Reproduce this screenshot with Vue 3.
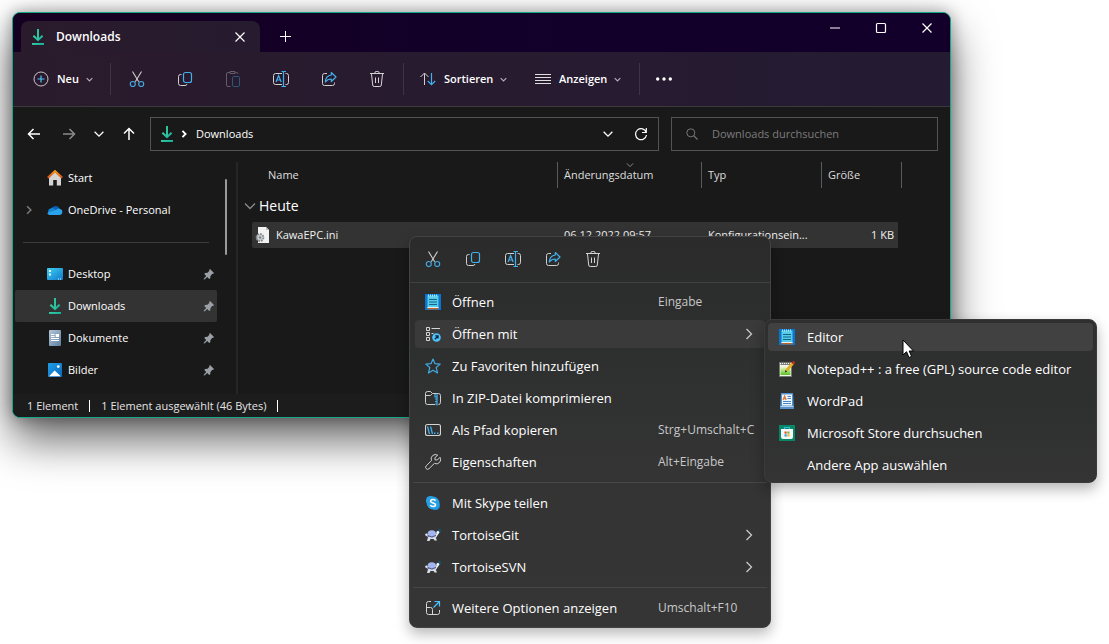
<script setup>
const fileTools = [
  { icon: 'cut', label: 'Ausschneiden' },
  { icon: 'copy', label: 'Kopieren' },
  { icon: 'paste', label: 'Einfügen' },
  { icon: 'rename', label: 'Umbenennen' },
  { icon: 'share', label: 'Freigeben' },
  { icon: 'trash', label: 'Löschen' },
]

const pinned = [
  { icon: 'desktop', label: 'Desktop' },
  { icon: 'download', label: 'Downloads', active: true },
  { icon: 'document', label: 'Dokumente' },
  { icon: 'pictures', label: 'Bilder' },
]

const quickActions = fileTools.filter((tool) => tool.icon !== 'paste')

const menuGroups = [
  [
    { icon: 'notepad', label: 'Öffnen', keys: 'Eingabe' },
    { icon: 'openwith', label: 'Öffnen mit', sub: true, active: true },
    { icon: 'star', label: 'Zu Favoriten hinzufügen' },
    { icon: 'zip', label: 'In ZIP-Datei komprimieren' },
    { icon: 'path', label: 'Als Pfad kopieren', keys: 'Strg+Umschalt+C' },
    { icon: 'wrench', label: 'Eigenschaften', keys: 'Alt+Eingabe' },
  ],
  [
    { icon: 'skype', label: 'Mit Skype teilen' },
    { icon: 'tortoise', label: 'TortoiseGit', sub: true },
    { icon: 'tortoise', label: 'TortoiseSVN', sub: true },
  ],
  [{ icon: 'more', label: 'Weitere Optionen anzeigen', keys: 'Umschalt+F10' }],
]

const openWith = [
  { icon: 'notepad', label: 'Editor', active: true },
  { icon: 'npp', label: 'Notepad++ : a free (GPL) source code editor' },
  { icon: 'wordpad', label: 'WordPad' },
  { icon: 'store', label: 'Microsoft Store durchsuchen' },
  { icon: '', label: 'Andere App auswählen' },
]
</script>

<template>
  <main class="desktop">
    <svg class="sprite" aria-hidden="true">
      <defs>
        <linearGradient id="g-down" x1="0" y1="0" x2="1" y2="1">
          <stop offset="0" stop-color="#3ad29f" /><stop offset="1" stop-color="#0fa59b" />
        </linearGradient>
        <linearGradient id="g-desk" x1="0" y1="0" x2="1" y2="1">
          <stop offset="0" stop-color="#3fd0ee" /><stop offset="1" stop-color="#0f78cf" />
        </linearGradient>
        <linearGradient id="g-doc" x1="0" y1="0" x2="1" y2="1">
          <stop offset="0" stop-color="#b4c5d8" /><stop offset="1" stop-color="#5f7f9f" />
        </linearGradient>
        <linearGradient id="g-pic" x1="0" y1="0" x2="1" y2="1">
          <stop offset="0" stop-color="#1f9fe8" /><stop offset="1" stop-color="#0a66bd" />
        </linearGradient>
        <linearGradient id="g-roof" x1="0" y1="0" x2="0" y2="1">
          <stop offset="0" stop-color="#f7941d" /><stop offset="1" stop-color="#d8541c" />
        </linearGradient>
        <linearGradient id="g-green" x1="0" y1="0" x2="0" y2="1">
          <stop offset="0" stop-color="#eef7c0" /><stop offset="1" stop-color="#58c322" />
        </linearGradient>
      </defs>
      <symbol id="download" viewBox="0 0 16 16">
        <path d="M3.400 6.800L8 11.200l4.600-4.400" fill="none" stroke="url(#g-down)" stroke-width="2" />
        <path d="M2 14h12v2H2z" fill="url(#g-down)" />
        <path d="M7 0h2v11H7z" fill="#2cc49c" />
      </symbol>
      <symbol id="new" viewBox="0 0 16 16">
        <circle cx="8" cy="8" r="7" fill="none" stroke="#c9c4cd" />
        <path d="M8 4.500v7M4.500 8h7" stroke="#4cc2ff" stroke-width="1.200" />
      </symbol>
      <symbol id="cut" viewBox="0 0 16 16">
        <path d="M3.500 .5l6.200 10.200M12.500 .5L6.300 10.700" stroke="#cfcfcf" fill="none" stroke-width="1.100" />
        <circle cx="3.800" cy="13" r="2.500" fill="none" stroke="#43a9e0" stroke-width="1.200" />
        <circle cx="12.200" cy="13" r="2.500" fill="none" stroke="#43a9e0" stroke-width="1.200" />
      </symbol>
      <symbol id="copy" viewBox="0 0 16 16">
        <path d="M4.500 3.500H3.500a2 2 0 0 0-2 2v7a2 2 0 0 0 2 2h4.500a2 2 0 0 0 2-1.500" fill="none" stroke="#d0d0d0" />
        <rect x="6.500" y="1.500" width="8" height="10" rx="2" fill="none" stroke="#43b0ec" stroke-width="1.200" />
      </symbol>
      <symbol id="paste" viewBox="0 0 16 16">
        <path d="M5 1.500H3a1.500 1.500 0 0 0-1.500 1.500v11A1.500 1.500 0 0 0 3 15.500h2.500M5 2.500V.5h5v2zM10 1.500h1.500A1.500 1.500 0 0 1 13 3" fill="none" stroke="#655d6b" />
        <rect x="7.500" y="5.500" width="7" height="10" rx="1.200" fill="none" stroke="#2d587e" />
      </symbol>
      <symbol id="rename" viewBox="0 0 16 16">
        <path d="M9 2.500H2.500a2 2 0 0 0-2 2v7a2 2 0 0 0 2 2H9M12.500 2.500h1a2 2 0 0 1 2 2v7a2 2 0 0 1-2 2h-1" fill="none" stroke="#d0d0d0" />
        <path d="M3 11L5.600 4.500 8.200 11M3.900 9h3.500M8.500 .5h4.500M8.500 15.500h4.500M10.500 .5v15" fill="none" stroke="#43b0ec" stroke-width="1.200" />
      </symbol>
      <symbol id="share" viewBox="0 0 16 16">
        <path d="M6 2.500H3.500a2 2 0 0 0-2 2v8a2 2 0 0 0 2 2h8a2 2 0 0 0 2-2V11.500" fill="none" stroke="#d0d0d0" />
        <path d="M10.300 1.500L15 6l-4.700 4.500V8c-3 0-4.500 1-6 3 .2-3.600 2.300-6.500 6-7z" fill="none" stroke="#43b0ec" stroke-width="1.200" stroke-linejoin="round" />
      </symbol>
      <symbol id="trash" viewBox="0 0 16 16">
        <path d="M1 2.500h14M5.700 2.500a2.300 2.300 0 0 1 4.600 0M2.500 3l1.200 11a1.500 1.500 0 0 0 1.500 1.500h5.600a1.500 1.500 0 0 0 1.500-1.500L13.500 3M6.500 6.500v5.500M9.500 6.500v5.500" fill="none" stroke="#d4d4d4" />
      </symbol>
      <symbol id="sort" viewBox="0 0 16 16">
        <path d="M4.500 14V2.500M.5 6l4-4 4 4" fill="none" stroke="#d0d0d0" />
        <path d="M11.500 2v11.500M7.800 10l3.700 3.700 3.700-3.700" fill="none" stroke="#43b0ec" stroke-width="1.200" />
      </symbol>
      <symbol id="view" viewBox="0 0 16 16">
        <path d="M0 3.500h16M0 6.500h16M0 9.500h16M0 12.500h16" stroke="#dedede" />
      </symbol>
      <symbol id="dots" viewBox="0 0 16 16">
        <circle cx="1.700" cy="8" r="1.700" fill="#fff" /><circle cx="8" cy="8" r="1.700" fill="#fff" /><circle cx="14.300" cy="8" r="1.700" fill="#fff" />
      </symbol>
      <symbol id="chevron" viewBox="0 0 16 16">
        <path d="M3 5.500L8 10.500 13 5.500" fill="none" stroke="currentColor" />
      </symbol>
      <symbol id="angle" viewBox="0 0 16 16">
        <path d="M5.500 3L10.500 8l-5 5" fill="none" stroke="currentColor" />
      </symbol>
      <symbol id="arrow" viewBox="0 0 16 16">
        <path d="M14 8H2.500M7.500 3l-5 5 5 5" fill="none" stroke="currentColor" stroke-width="1.500" />
      </symbol>
      <symbol id="cross" viewBox="0 0 16 16">
        <path d="M3.500 3.500l9 9M12.500 3.500l-9 9" stroke="currentColor" stroke-width="1.200" />
      </symbol>
      <symbol id="plus" viewBox="0 0 16 16">
        <path d="M7.500 2v11M2 7.500h11" stroke="currentColor" />
      </symbol>
      <symbol id="minimize" viewBox="0 0 16 16"><path d="M3 8h10" stroke="currentColor" /></symbol>
      <symbol id="maximize" viewBox="0 0 16 16"><rect x="3.500" y="3.500" width="9" height="9" rx="1" fill="none" stroke="currentColor" stroke-width="1.200" /></symbol>
      <symbol id="refresh" viewBox="0 0 16 16">
        <path d="M13.300 6.500A5.500 5.500 0 1 0 13.500 9M13.300 2v4.500H9" fill="none" stroke="currentColor" stroke-width="1.200" />
      </symbol>
      <symbol id="search" viewBox="0 0 16 16">
        <circle cx="6.800" cy="6.800" r="4" fill="none" stroke="#777" /><path d="M9.700 9.700L13.500 13.500" stroke="#777" stroke-width="1.200" />
      </symbol>
      <symbol id="home" viewBox="0 0 16 16">
        <path d="M2 7L8 1.500 14 7v8.500H9.800V10H6.200v5.500H2z" fill="#d3d3d3" />
        <path d="M.8 7.800L8 1.200l7.200 6.600" fill="none" stroke="url(#g-roof)" stroke-width="2.200" />
      </symbol>
      <symbol id="cloud" viewBox="0 0 16 16">
        <path d="M4 8.500a4.500 4.500 0 0 1 8.500-2L10 11H4z" fill="#0a5fb5" />
        <path d="M3.500 13A3.500 3.500 0 0 1 4 6.200c2.500-.5 4 1 6 2.800L7 13z" fill="#1485d6" />
        <path d="M9 8c1-1.700 3-2 4.200-1A3.100 3.100 0 0 1 13 13H3.500C1.500 13 .5 12 .3 11z" fill="#2aa3ea" />
      </symbol>
      <symbol id="desktop" viewBox="0 0 16 16">
        <rect y="2" width="16" height="12" rx="1" fill="url(#g-desk)" />
        <path d="M2 4h2v2H2zM2 7.500h2v2H2zM11 12.500h1v1h-1zM13 12.500h1v1h-1z" fill="#e9fbff" />
      </symbol>
      <symbol id="document" viewBox="0 0 16 16">
        <rect x="2" width="12" height="16" rx="1" fill="url(#g-doc)" />
        <path d="M4 4h3.500v1H4zM4 6h3.500v1H4zM8.700 4H12v3H8.700zM4 8h8v1H4zM4 10h8v1H4z" fill="#fff" />
      </symbol>
      <symbol id="pictures" viewBox="0 0 16 16">
        <rect x="1" y="1" width="14" height="14" rx="1" fill="url(#g-pic)" />
        <path d="M2 14.300L7.600 8.500 13.800 14.300z" fill="#fff" /><circle cx="11.300" cy="4.600" r="1.400" fill="#fff" />
      </symbol>
      <symbol id="pin" viewBox="0 0 12 12">
        <path d="M7 1l4 4-1 1-.7-.2L7.500 8l-.3 2.300-1 .7-2-2L1.500 11.500.5 11l2.700-3L1.300 6l.8-1 2.400-.2L6.400 2.800 6.200 1.800z" fill="#9ba0a6" />
      </symbol>
      <symbol id="inifile" viewBox="0 0 16 16">
        <path d="M3 0h8l3 3v13H3z" fill="#f2f2f2" /><path d="M11 0v3h3z" fill="#bdbdbd" />
        <circle cx="5" cy="10.500" r="3.500" fill="#c9ced1" stroke="#858b8f" stroke-width="1.800" stroke-dasharray="1.700 1" />
        <circle cx="5" cy="10.500" r="1.200" fill="#7b8286" />
      </symbol>
      <symbol id="notepad" viewBox="0 0 16 16">
        <path d="M0 0h16v16H0z" fill="#0b74d1" />
        <path d="M2.500 1.500h11v13h-11z" fill="#57cbe8" /><path d="M2.500 14h11v1.500h-11z" fill="#b9642a" /><path d="M2.500 13h11v1h-11z" fill="#e6f4f8" />
        <path d="M3.500 .5v2M5.500 .5v2M7.500 .5v2M9.500 .5v2M11.500 .5v2" stroke="#a9ebf8" />
        <path d="M4 5.500h8M4 8h8M4 10.500h8" stroke="#12668a" stroke-width="1.200" />
      </symbol>
      <symbol id="openwith" viewBox="0 0 16 16">
        <path d="M1.500 1.500h3v3h-3zM1.500 6.500h3v3h-3zM1.500 11.500h3v3h-3zM6.500 2.500h8.500M6.500 7.500h2" fill="none" stroke="#d5d5d5" />
        <circle cx="11.500" cy="11.500" r="4.300" fill="#4cc2ff" />
        <path d="M9.800 13.200l3-3M10.300 9.900H13v2.700" fill="none" stroke="#10222c" stroke-width="1.300" />
      </symbol>
      <symbol id="star" viewBox="0 0 16 16">
        <path d="M8 1l2 4.700 5.200.4-4 3.400L12.500 15 8 12.200 3.500 15l1.300-5.500-4-3.400L6 5.700z" fill="none" stroke="#43a9e0" stroke-width="1.200" stroke-linejoin="round" />
      </symbol>
      <symbol id="zip" viewBox="0 0 16 16">
        <path d="M10 14.500H2.500a2 2 0 0 1-2-2v-9a2 2 0 0 1 2-2h3L7.500 3.500H13.500a2 2 0 0 1 2 2v7a2 2 0 0 1-2 2M.5 5.500h5L7.500 3.500" fill="none" stroke="#cfcfcf" />
        <path d="M12 3.500v12M10 4v3h2M12 9h-2M12 11.500h-2M12 14h-2" fill="none" stroke="#43b0ec" stroke-width="1.200" />
      </symbol>
      <symbol id="path" viewBox="0 0 16 16">
        <rect x=".5" y="2.500" width="15" height="11" rx="2" fill="none" stroke="#d5d5d5" stroke-width="1.100" />
        <path d="M2.500 4.500L4.500 12M5.500 4.500L7.500 12" stroke="#43b0ec" stroke-width="1.300" /><path d="M9 10.500h1.500V12H9zM12 10.500h1.500V12H12z" fill="#43b0ec" />
      </symbol>
      <symbol id="wrench" viewBox="0 0 16 16">
        <path d="M12.700 1.200A4.300 4.300 0 0 0 6.500 6.600L1.200 11.900a1.900 1.900 0 0 0 2.800 2.800L9.400 9.400A4.300 4.300 0 0 0 15 3.300L12.300 6 10 5.800 9.900 3.700z" fill="none" stroke="#d0d0d0" stroke-linejoin="round" />
      </symbol>
      <symbol id="skype" viewBox="0 0 16 16">
        <circle cx="5.500" cy="5.500" r="4.500" fill="#27a3e6" /><circle cx="10.500" cy="10.500" r="4.500" fill="#1f8fd9" /><circle cx="8" cy="8" r="6.400" fill="#25a0e5" />
        <path d="M10.600 5.700C9.800 4 5.600 4 5.600 6.200c0 2.300 4.900 1.200 4.900 3.600 0 2.300-4.300 2.200-5.200.2" fill="none" stroke="#fff" stroke-width="1.600" />
      </symbol>
      <symbol id="tortoise" viewBox="0 0 16 16">
        <path d="M13 2.500l2.500-.5v3.500L13.500 7z" fill="#145a78" />
        <path d="M.5 7l2.500 2M10 10.500l3.500-5.500" stroke="#e4e6ee" stroke-width="2" />
        <path d="M3 10h7.500l1.500 3.500H9.500L8.500 12H5.500l-1 2H2z" fill="#d9dce6" />
        <ellipse cx="6.800" cy="7" rx="4.300" ry="3.800" fill="#a4b4ef" />
        <path d="M2.600 8.500q4 2.800 8.400 0" stroke="#4e577c" fill="none" />
        <circle cx="12.800" cy="5.300" r="1.300" fill="#fff" />
      </symbol>
      <symbol id="more" viewBox="0 0 16 16">
        <path d="M6 1.500H3.500a2 2 0 0 0-2 2v9a2 2 0 0 0 2 2h9a2 2 0 0 0 2-2V10M1.500 7.500h4a2 2 0 0 1 2 2v5" fill="none" stroke="#d5d5d5" />
        <path d="M8.500 7.500l6-6M9.500 1.500h5v5" fill="none" stroke="#4cc2ff" stroke-width="1.200" />
      </symbol>
      <symbol id="npp" viewBox="0 0 16 16">
        <path d="M.5 1.500h12v14H.5z" fill="#f4f4ee" stroke="#77776f" /><path d="M1.500 6h10v8h-10z" fill="url(#g-green)" />
        <path d="M1.500 3.500h10M2.500 .5v3M4.500 .5v3M6.500 .5v3M8.500 .5v3M10.500 .5v3" stroke="#686868" stroke-width=".8" />
        <path d="M14 2L7.500 9.500" stroke="#e5ad27" stroke-width="2.800" /><path d="M15.500 .5L13.500 2.700" stroke="#b82c17" stroke-width="2.800" /><path d="M6 11.500l.3-2.500 1.800 1.400z" fill="#222" />
      </symbol>
      <symbol id="wordpad" viewBox="0 0 16 16">
        <path d="M2 0h12l1 16H1z" fill="#568fca" /><path d="M3 1.500h10v11H3z" fill="#edf5fc" />
        <path d="M4 7L5.600 3 7.200 7M4.700 5.700h2" stroke="#e0752c" stroke-width="1.200" fill="none" />
        <path d="M8.500 3.500H12M8.500 5.500H12M4 8.500h8M4 10.500h8" stroke="#4785c6" /><path d="M1.500 13.500h13" stroke="#b8d3ed" />
      </symbol>
      <symbol id="store" viewBox="0 0 16 16">
        <path d="M0 0h16v16H0z" fill="#078765" /><path d="M5.500 4V2.500h5V4" fill="none" stroke="#35b8dc" stroke-width="1.200" />
        <path d="M2 4h12v8a2 2 0 0 1-2 2H4a2 2 0 0 1-2-2z" fill="#f6f6f6" />
        <path d="M5.500 6.500h2.200v2.200H5.500z" fill="#e8502b" /><path d="M8.300 6.500h2.200v2.200H8.300z" fill="#77b82c" /><path d="M5.500 9.300h2.200v2.200H5.500z" fill="#28a0dc" /><path d="M8.300 9.300h2.200v2.200H8.300z" fill="#efb51f" />
      </symbol>
    </svg>

    <section class="window" aria-label="Downloads">
      <header class="titlebar">
        <div class="tab">
          <svg class="icon"><use href="#download" /></svg>
          <span class="tab-title">Downloads</span>
          <button class="tab-close" aria-label="Tab schließen"><svg class="icon"><use href="#cross" /></svg></button>
        </div>
        <button class="tab-new" aria-label="Neuer Tab"><svg class="icon"><use href="#plus" /></svg></button>
        <div class="controls">
          <button aria-label="Minimieren"><svg class="icon"><use href="#minimize" /></svg></button>
          <button aria-label="Maximieren"><svg class="icon"><use href="#maximize" /></svg></button>
          <button aria-label="Schließen"><svg class="icon"><use href="#cross" /></svg></button>
        </div>
      </header>

      <div class="toolbar">
        <button class="tool-text new">
          <svg class="icon"><use href="#new" /></svg><span class="tool-label">Neu</span><svg class="caret"><use href="#chevron" /></svg>
        </button>
        <div class="tool-group">
          <button v-for="tool in fileTools" :key="tool.icon" class="tool-icon" :aria-label="tool.label">
            <svg class="icon"><use :href="'#' + tool.icon" /></svg>
          </button>
        </div>
        <button class="tool-text sort">
          <svg class="icon"><use href="#sort" /></svg><span class="tool-label">Sortieren</span><svg class="caret"><use href="#chevron" /></svg>
        </button>
        <button class="tool-text view">
          <svg class="icon"><use href="#view" /></svg><span class="tool-label">Anzeigen</span><svg class="caret"><use href="#chevron" /></svg>
        </button>
        <button class="tool-icon" aria-label="Weitere Informationen"><svg class="icon"><use href="#dots" /></svg></button>
      </div>

      <nav class="navbar">
        <button class="nav-btn" aria-label="Zurück"><svg class="icon"><use href="#arrow" /></svg></button>
        <button class="nav-btn forward" aria-label="Vorwärts"><svg class="icon"><use href="#arrow" /></svg></button>
        <button class="nav-btn recent" aria-label="Zuletzt besucht"><svg class="icon small"><use href="#chevron" /></svg></button>
        <button class="nav-btn up" aria-label="Nach oben"><svg class="icon"><use href="#arrow" /></svg></button>
        <div class="address">
          <svg class="icon"><use href="#download" /></svg>
          <svg class="crumb-sep"><use href="#angle" /></svg>
          <a class="crumb" href="#">Downloads</a>
          <button class="addr-btn" aria-label="Verlauf"><svg class="icon small"><use href="#chevron" /></svg></button>
          <button class="addr-btn" aria-label="Aktualisieren"><svg class="icon"><use href="#refresh" /></svg></button>
        </div>
        <label class="search">
          <svg class="icon"><use href="#search" /></svg>
          <input type="search" placeholder="Downloads durchsuchen" aria-label="Downloads durchsuchen" />
        </label>
      </nav>

      <div class="body">
        <aside class="sidebar">
          <div class="tree">
            <a class="tree-item" href="#">
              <span class="expander"></span><svg class="icon"><use href="#home" /></svg><span>Start</span>
            </a>
            <a class="tree-item" href="#">
              <svg class="expander"><use href="#angle" /></svg><svg class="icon"><use href="#cloud" /></svg><span>OneDrive - Personal</span>
            </a>
            <hr class="tree-rule" />
            <a v-for="item in pinned" :key="item.label" class="tree-item" :class="{ active: item.active }" href="#">
              <span class="expander"></span><svg class="icon"><use :href="'#' + item.icon" /></svg>
              <span>{{ item.label }}</span><svg class="pin"><use href="#pin" /></svg>
            </a>
          </div>
          <div class="scroll-thumb"></div>
        </aside>

        <div class="content">
          <table class="files">
            <colgroup>
              <col class="c-name" /><col class="c-date" /><col class="c-type" /><col class="c-size" />
            </colgroup>
            <thead>
              <tr>
                <th class="name-head" scope="col">Name</th>
                <th scope="col">Änderungsdatum<svg class="sorted"><use href="#chevron" /></svg></th>
                <th scope="col">Typ</th>
                <th scope="col">Größe</th>
              </tr>
            </thead>
            <tbody>
              <tr class="group">
                <th colspan="4" scope="rowgroup"><span class="group-label"><svg class="icon"><use href="#chevron" /></svg>Heute</span></th>
              </tr>
              <tr class="file">
                <td><span class="file-name"><svg class="icon"><use href="#inifile" /></svg>KawaEPC.ini</span></td>
                <td>06.12.2022 09:57</td>
                <td>Konfigurationsein...</td>
                <td class="size">1 KB</td>
              </tr>
            </tbody>
          </table>
        </div>
      </div>

      <footer class="status"><span>1 Element</span><span>1 Element ausgewählt (46 Bytes)</span></footer>
    </section>

    <div class="menu context" role="menu">
      <div class="quick">
        <button v-for="a in quickActions" :key="a.icon" :aria-label="a.label"><svg class="icon"><use :href="'#' + a.icon" /></svg></button>
      </div>
      <div v-for="(group, g) in menuGroups" :key="g" class="group-box">
        <button v-for="item in group" :key="item.label" class="menu-item" :class="{ active: item.active }" role="menuitem">
          <svg class="icon"><use :href="'#' + item.icon" /></svg>
          <span class="menu-label">{{ item.label }}</span>
          <span v-if="item.keys" class="keys">{{ item.keys }}</span>
          <svg v-if="item.sub" class="icon more"><use href="#angle" /></svg>
        </button>
      </div>
    </div>

    <div class="menu submenu" role="menu">
      <button v-for="item in openWith" :key="item.label" class="menu-item" :class="{ active: item.active }" role="menuitem">
        <svg class="icon"><use v-if="item.icon" :href="'#' + item.icon" /></svg>
        <span class="menu-label">{{ item.label }}</span>
      </button>
    </div>

    <svg class="cursor" viewBox="0 0 12 20" aria-hidden="true">
      <path d="M1 1v15l3.500-3.300L7 18.500l2.600-1.100L7.200 12H11.500z" fill="#fff" stroke="#000" />
    </svg>
  </main>
</template>

<style>
body { margin: 0; background: #fff; }
</style>

<style scoped>
.desktop {
  position: relative;
  box-sizing: border-box;
  min-height: 100vh;
  padding: 12px 158px 0 12px;
  overflow: hidden;
  font-family: "Open Sans", "Noto Sans", sans-serif;
  font-size: 11px;
  line-height: 16px;
  color: #fff;
}
.sprite { position: absolute; width: 0; height: 0; }
.icon { width: 16px; height: 16px; flex: none; display: block; stroke-width: 1; }
.icon.small { width: 14px; height: 14px; stroke-width: 1.5; }
button {
  display: flex; align-items: center; justify-content: center;
  padding: 0; border: 0; background: none; color: inherit; font: inherit;
}
a { color: inherit; text-decoration: none; }

.window {
  display: flex; flex-direction: column;
  border: 1px solid #14a887;
  border-radius: 8px;
  background: #191919;
  box-shadow: 0 0 16px rgba(0, 0, 0, .35), 0 22px 44px rgba(0, 0, 0, .6);
}
.titlebar {
  display: flex; align-items: flex-end;
  height: 39px; padding-left: 8px;
  border-radius: 7px 7px 0 0;
  background: linear-gradient(90deg, #160021, #12002b 60%);
}
.tab {
  display: flex; align-items: center;
  box-sizing: border-box;
  width: 239px; height: 31px; padding: 0 12px 0 9px;
  border-radius: 8px 8px 0 0;
  background: linear-gradient(90deg, #2a1b2c, #261b2f);
}
.tab-title { flex: 1; margin-left: 10px; font-size: 12px; font-weight: 600; }
.tab-new { width: 52px; height: 31px; }
.controls { display: flex; align-self: flex-start; margin-left: auto; }
.controls button { width: 46px; height: 29px; }

.toolbar {
  display: flex; align-items: center;
  height: 54px;
  border-bottom: 1px solid #3a3a3a;
  background: linear-gradient(90deg, #2a1b2c, #241b33);
  font-weight: 600;
}
.tool-text { box-sizing: border-box; height: 32px; justify-content: flex-start; }
.new { width: 98px; padding-left: 20px; border-right: 1px solid #3d3446; }
.sort { width: 114px; padding-left: 16px; }
.view { width: 122px; padding-left: 17px; border-right: 1px solid #3d3446; }
.tool-label { margin: 0 6px 0 8px; }
.caret { width: 9px; height: 9px; color: #b5afba; stroke-width: 2; }
.tool-group { display: flex; align-items: center; height: 32px; padding: 0 2px; border-right: 1px solid #3d3446; }
.tool-icon { width: 48px; height: 32px; }

.navbar { display: flex; align-items: center; height: 34px; padding: 10px 12px 11px 3px; }
.nav-btn { width: 35px; height: 32px; }
.forward { color: #8c8c8c; }
.forward svg { transform: rotate(180deg); }
.recent { width: 26px; }
.up { width: 34px; }
.up svg { transform: rotate(90deg); }
.address, .search { display: flex; align-items: center; box-sizing: border-box; height: 34px; border: 1px solid #535353; }
.address { flex: 1; margin-left: 4px; padding: 0 1px 0 8px; }
.crumb-sep { width: 10px; height: 10px; margin: 0 7px 0 4px; stroke-width: 3; }
.crumb { flex: 1; }
.addr-btn { width: 33px; height: 32px; }
.search { width: 267px; margin-left: 12px; padding-left: 12px; }
.search input {
  flex: 1; min-width: 0; margin-left: 12px; padding: 0;
  border: 0; outline: 0; background: none; color: #fff; font: inherit;
}
.search input::placeholder { color: #7c7c7c; opacity: 1; }

.body { display: flex; }
.sidebar { display: flex; width: 223px; border-right: 2px solid #262626; }
.tree { width: 202px; margin-left: 2px; padding-bottom: 8px; }
.tree-item { display: flex; align-items: center; height: 32px; padding-right: 2px; border-radius: 2px; }
.tree-item.active { background: #333; }
.expander { width: 12px; height: 12px; margin: 0 12px 0 8px; color: #7a7a7a; stroke-width: 2; flex: none; }
.tree-item .icon { margin-right: 5px; }
.pin { width: 12px; height: 12px; margin-left: auto; }
.tree-rule { height: 1px; margin: 16px 8px 15px; border: 0; background: #3d3d3d; }
.scroll-thumb { width: 2px; height: 76px; margin: 17px 0 0 8px; border-radius: 1px; background: #9a9a9a; }

.content { flex: 1; min-width: 0; padding-left: 14px; }
.files { width: 650px; table-layout: fixed; border-collapse: separate; border-spacing: 0; }
.c-name { width: 306px; }
.c-date { width: 144px; }
.c-type { width: 120px; }
.c-size { width: 80px; }
.files th { position: relative; font-weight: 400; text-align: left; color: #dedede; }
.files td { height: 26px; padding: 0 0 0 6px; color: #f0f0f0; background: #333; white-space: nowrap; }
.files thead th { height: 26px; padding: 0 0 0 6px; border-right: 1px solid #5a5a5a; }
.files thead .name-head { padding-left: 16px; }
.files .group th { height: 32px; padding: 2px 0 0; color: #fff; font-size: 14px; }
.group-label, .file-name { display: flex; align-items: center; }
.group-label { margin-left: -10px; }
.group-label .icon { color: #8a8a8a; margin-right: 1px; stroke-width: 1.3; }
.file-name .icon { margin: 0 5px 0 -3px; }
.files td:first-child { border-radius: 2px 0 0 2px; }
.files .size { padding-right: 4px; text-align: right; border-right: 4px solid transparent; background-clip: padding-box; }
.sorted { position: absolute; top: -2px; left: 67px; width: 10px; height: 10px; color: #8a8a8a; stroke-width: 1.6; }

.status { display: flex; align-items: center; height: 23px; padding-left: 14px; background: #1c1c1c; border-radius: 0 0 7px 7px; color: #e4e4e4; }
.status span { padding-right: 11px; margin-right: 11px; line-height: 12px; border-right: 1px solid #fff; }

.menu {
  position: absolute;
  display: flex; flex-direction: column;
  box-sizing: border-box;
  border: 1px solid #434343;
  border-radius: 8px;
  background: linear-gradient(#2b2b2b, #2e2f2f 30%, #343434 60%, #353535);
}
.context { left: 409px; top: 236px; width: 362px; padding-bottom: 3px; box-shadow: 0 6px 14px rgba(0, 0, 0, .28); }
.submenu { left: 764px; top: 319px; width: 333px; padding: 1px 0; background: linear-gradient(#2f2f2f, #2e2f2f 50%, #343434); border-color: #3a3a3a; box-shadow: 0 6px 14px rgba(0, 0, 0, .3); }
.quick { display: flex; height: 43px; padding: 0 0 2px 3px; border-bottom: 1px solid #414141; margin-bottom: 3px; }
.quick button { width: 40px; }
.group-box { display: flex; flex-direction: column; }
.group-box + .group-box { margin-top: 4px; padding-top: 5px; background: linear-gradient(#474747, #474747) 50% 0 / calc(100% - 6px) 1px no-repeat; }
.menu-item {
  justify-content: flex-start;
  height: 28px; margin: 2px 5px; padding: 0 8px 0 10px;
  border-radius: 4px; font-size: 13px; line-height: 20px; text-align: left;
}
.menu-item.active { background: #3a3a3a; }
.submenu .menu-item { margin: 2px 3px; padding-left: 11px; }
.submenu .menu-item.active { background: #414141; }
.menu-label { margin-left: 11px; white-space: nowrap; }
.submenu .menu-label { margin-left: 12px; }
.keys { width: 99px; margin-left: auto; font-size: 12px; color: #c8c8c8; white-space: nowrap; }
.more { margin-left: auto; color: #c8c8c8; stroke-width: 1.3; }
.cursor { position: absolute; left: 902px; top: 339px; width: 12px; height: 20px; }
</style>
